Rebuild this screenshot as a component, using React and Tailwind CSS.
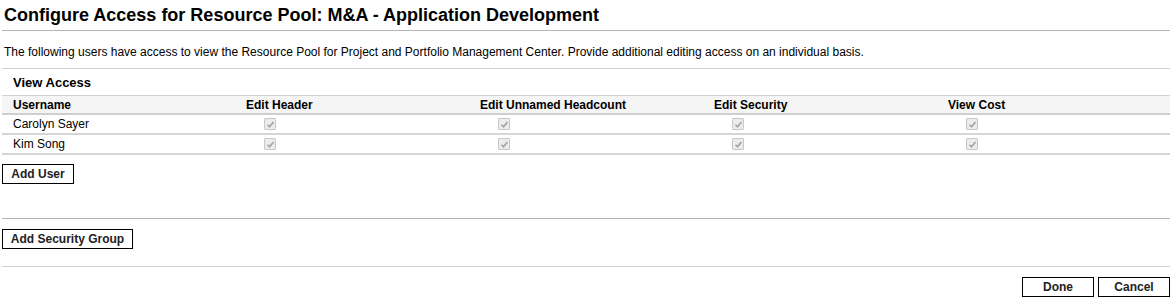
import React from 'react'

const users = ['Carolyn Sayer', 'Kim Song']
const cols = ['Edit Header', 'Edit Unnamed Headcount', 'Edit Security', 'View Cost']

function Check() {
  return (
    <span className="inline-flex w-[12px] h-[12px] items-center justify-center border border-[#c8c8c8] bg-[#ececec] rounded-[1px]">
      <svg width="9" height="9" viewBox="0 0 9 9">
        <path d="M1.5 4.8 L3.5 6.8 L7.5 2" fill="none" stroke="#a3a3a3" strokeWidth="1.6" />
      </svg>
    </span>
  )
}

function Btn({ children, className = '' }) {
  return (
    <button className={`h-[20px] border border-black bg-white text-[12px] font-bold text-[#222] leading-none ${className}`}>
      {children}
    </button>
  )
}

export default function App() {
  const grid = 'grid grid-cols-[242px_234px_234px_234px_1fr]'
  return (
    <div className="w-[1175px] h-[301px] bg-white text-black font-['Liberation_Sans',Arial,sans-serif] pl-[2px] pr-[5px]">
      <div className="pt-[4px] h-[31px] border-b border-[#b4b4b4]">
        <h1 className="pl-[2px] text-[18px] font-bold leading-[22px]">
          Configure Access for Resource Pool: M&amp;A - Application Development
        </h1>
      </div>

      <p className="h-[38px] border-b border-[#d0d0d0] pl-[2px] pt-[14px] text-[12px] leading-[14px]">
        The following users have access to view the Resource Pool for Project and Portfolio Management Center. Provide additional editing access on an individual basis.
      </p>

      <div className="h-[26px] pl-[11px] pt-[6px] text-[13px] font-bold leading-[16px]">View Access</div>

      <div className="text-[12px]">
        <div className={`${grid} h-[20px] items-center bg-[#f5f5f5] border-t border-[#d0d0d0] border-b-2 border-b-[#cfcfcf] font-bold`}>
          {['Username', ...cols].map((c, i) => (
            <div key={c} className={i === 0 ? 'pl-[11px]' : 'pl-[2px]'}>{c}</div>
          ))}
        </div>
        {users.map((u) => (
          <div key={u} className={`${grid} h-[20px] items-center border-b-2 border-[#d6d6d6]`}>
            <div className="pl-[11px]">{u}</div>
            {cols.map((c) => (
              <div key={c} className="pl-[20px] flex items-center">
                <Check />
              </div>
            ))}
          </div>
        ))}
      </div>

      <div className="flex items-start pt-[9px] h-[64px] border-b border-[#b4b4b4]">
        <Btn className="w-[72px]">Add User</Btn>
      </div>

      <div className="flex items-start pt-[10px] h-[48px] border-b border-[#d0d0d0]">
        <Btn className="w-[131px]">Add Security Group</Btn>
      </div>

      <div className="flex justify-end gap-[4px] pt-[10px]">
        <Btn className="w-[72px]">Done</Btn>
        <Btn className="w-[72px]">Cancel</Btn>
      </div>
    </div>
  )
}
